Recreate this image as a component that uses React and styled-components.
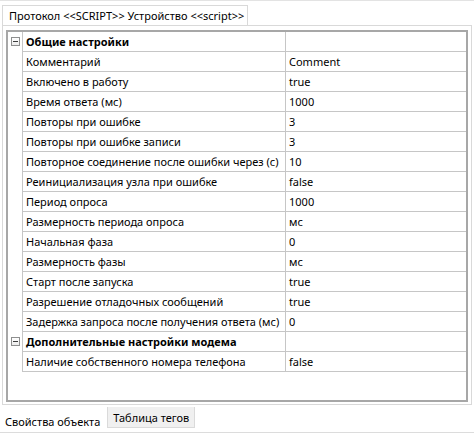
import React from "react";
import styled, { createGlobalStyle } from "styled-components";

const Global = createGlobalStyle`
  html, body { margin: 0; padding: 0; background: #fff; }
  * { box-sizing: border-box; }
`;

const FONT = `"Noto Sans", "DejaVu Sans", sans-serif`;

const Window = styled.div`
  width: 474px;
  height: 435px;
  display: flex;
  flex-direction: column;
  font-family: ${FONT};
  font-size: 11px;
  color: #000;
  background: #fff;
  border-top: 1px solid #e3e3e3;
  overflow: hidden;
`;

const TopStrip = styled.div`
  height: 24px;
  display: flex;
  align-items: flex-end;
  padding-left: 2px;
`;

const TopTab = styled.div`
  height: 20px;
  width: 246px;
  padding: 0 0 0 6px;
  display: flex;
  align-items: center;
  border: 1px solid #d9d9d9;
  border-bottom: none;
  background: #fff;
  white-space: nowrap;
`;

const Panel = styled.div`
  margin: 0 2px 0 2px;
  height: 381px;
  border: 1px solid #d9d9d9;
  padding: 4px 3px 2px 3px;
  display: flex;
`;

const Grid = styled.div`
  flex: 1;
  border: 2px solid #a7a7a7;
  background: #fff;
`;

const Row = styled.div`
  display: grid;
  grid-template-columns: 15px 263px 1fr;
  height: 20px;
`;

const Gutter = styled.div`
  border-right: 1px solid #c6c6c6;
  display: flex;
  align-items: center;
  padding-left: 3px;
`;

const Cell = styled.div`
  border-bottom: 1px solid #c6c6c6;
  border-right: ${(p) => (p.$divider ? "1px solid #c6c6c6" : "none")};
  display: flex;
  align-items: center;
  padding-left: ${(p) => (p.$value ? "3px" : "3px")};
  padding-top: 1px;
  font-weight: ${(p) => (p.$bold ? 700 : 400)};
  white-space: nowrap;
  overflow: hidden;
`;

const Toggle = styled.div`
  width: 9px;
  height: 9px;
  border: 1px solid #8e8f8f;
  background: linear-gradient(#ffffff, #ececec);
  position: relative;
  &::after {
    content: "";
    position: absolute;
    left: 1px;
    top: 3px;
    width: 5px;
    height: 1px;
    background: #3c3c3c;
  }
`;

const BottomStrip = styled.div`
  flex: 1;
  display: flex;
  align-items: flex-start;
  padding-top: 2px;
  border-bottom: 1px solid #dcdcdc;
  margin-bottom: 2px;
`;

const BottomTab = styled.div`
  height: ${(p) => (p.$active ? "25px" : "21px")};
  padding: ${(p) => (p.$active ? "3px 7px 0 5px" : "0 5px")};
  display: flex;
  align-items: center;
  white-space: nowrap;
  background: ${(p) => (p.$active ? "#fff" : "#f0f0f0")};
  border: ${(p) => (p.$active ? "none" : "1px solid #dadada")};
  border-top: none;
`;

const groups = [
  {
    title: "Общие настройки",
    items: [
      ["Комментарий", "Comment"],
      ["Включено в работу", "true"],
      ["Время ответа (мс)", "1000"],
      ["Повторы при ошибке", "3"],
      ["Повторы при ошибке записи", "3"],
      ["Повторное соединение после ошибки через (с)", "10"],
      ["Реинициализация узла при ошибке", "false"],
      ["Период опроса", "1000"],
      ["Размерность периода опроса", "мс"],
      ["Начальная фаза", "0"],
      ["Размерность фазы", "мс"],
      ["Старт после запуска", "true"],
      ["Разрешение отладочных сообщений", "true"],
      ["Задержка запроса после получения ответа (мс)", "0"],
    ],
  },
  {
    title: "Дополнительные настройки модема",
    items: [["Наличие собственного номера телефона", "false"]],
  },
];

function PropertyGrid() {
  return (
    <Grid>
      {groups.map((g) => (
        <React.Fragment key={g.title}>
          <Row>
            <Gutter>
              <Toggle />
            </Gutter>
            <Cell $bold $divider>{g.title}</Cell>
            <Cell $value />
          </Row>
          {g.items.map(([name, value]) => (
            <Row key={name}>
              <Gutter />
              <Cell $divider>{name}</Cell>
              <Cell $value>{value}</Cell>
            </Row>
          ))}
        </React.Fragment>
      ))}
    </Grid>
  );
}

export default function App() {
  return (
    <Window>
      <Global />
      <TopStrip>
        <TopTab>Протокол &lt;&lt;SCRIPT&gt;&gt; Устройство &lt;&lt;script&gt;&gt;</TopTab>
      </TopStrip>
      <Panel>
        <PropertyGrid />
      </Panel>
      <BottomStrip>
        <BottomTab $active>Свойства объекта</BottomTab>
        <BottomTab>Таблица тегов</BottomTab>
      </BottomStrip>
    </Window>
  );
}
